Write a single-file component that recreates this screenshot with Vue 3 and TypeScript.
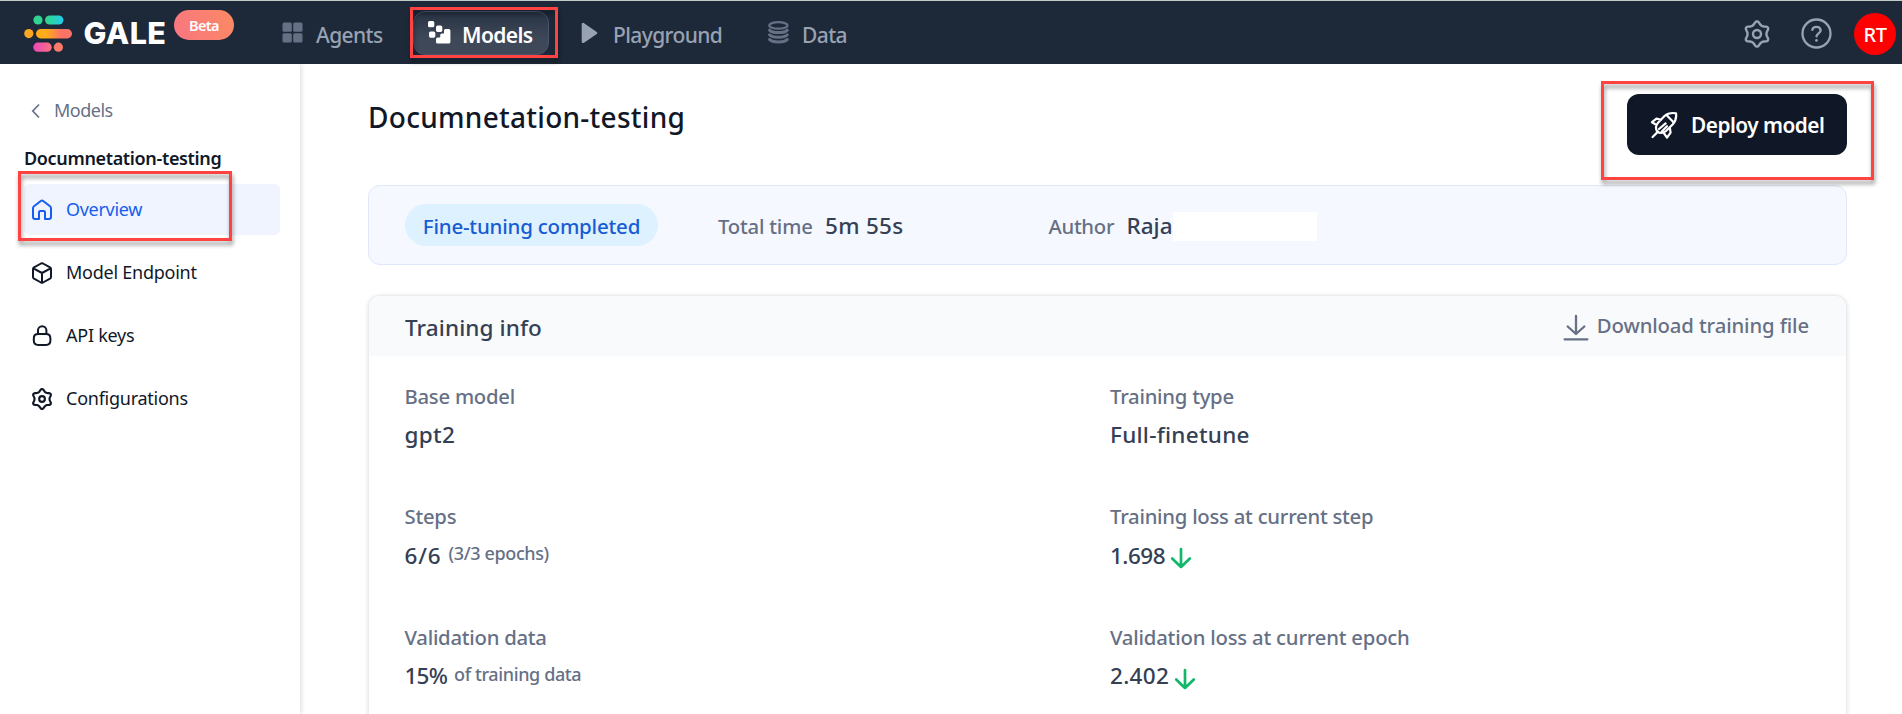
<script setup lang="ts">
interface Field {
  id: string
  label: string
  value: string
  note?: string
  down?: boolean
}

const fields: Field[] = [
  { id: 'base', label: 'Base model', value: 'gpt2' },
  { id: 'type', label: 'Training type', value: 'Full-finetune' },
  { id: 'steps', label: 'Steps', value: '6/6', note: '(3/3 epochs)' },
  { id: 'tloss', label: 'Training loss at current step', value: '1.698', down: true },
  { id: 'vdata', label: 'Validation data', value: '15%', note: 'of training data' },
  { id: 'vloss', label: 'Validation loss at current epoch', value: '2.402', down: true },
]

const menu: { id: string; label: string }[] = [
  { id: 'overview', label: 'Overview' },
  { id: 'endpoint', label: 'Model Endpoint' },
  { id: 'keys', label: 'API keys' },
  { id: 'config', label: 'Configurations' },
]

// Six-lobed gear outline centred in a 28-unit box
const gear: string =
  Array.from({ length: 72 }, (_, i) => {
    const t = (i * Math.PI) / 36
    const r = 10.8 + 1.6 * Math.cos(6 * t) + 0.25 * Math.cos(12 * t)
    return `${i ? 'L' : 'M'}${(14 + r * Math.sin(t)).toFixed(2)} ${(14 - r * Math.cos(t)).toFixed(2)}`
  }).join('') + 'Z'
</script>

<template>
  <div class="page">
    <header class="bar">
      <div class="brand">
        <svg class="logo" width="50" height="38" viewBox="0 0 50 38">
          <defs>
            <linearGradient id="teal" x1="0" y1="0" x2="1" y2="0"><stop offset="0" stop-color="#32d583" /><stop offset="1" stop-color="#22ccee" /></linearGradient>
            <linearGradient id="amber" x1="0" y1="0" x2="1" y2="0"><stop offset=".3" stop-color="#ffab1a" /><stop offset=".7" stop-color="#fb7366" /></linearGradient>
            <linearGradient id="pink" x1="0" y1="0" x2="1" y2="0"><stop offset="0" stop-color="#ee46bc" /><stop offset="1" stop-color="#f8727d" /></linearGradient>
          </defs>
          <circle cx="14" cy="5" r="4.6" fill="#2fd393" />
          <rect x="21" y=".4" width="18.4" height="9.2" rx="4.6" fill="url(#teal)" />
          <circle cx="4.8" cy="18.6" r="4.6" fill="#ffa524" />
          <rect x="12" y="14" width="36" height="9.4" rx="4.7" fill="url(#amber)" />
          <rect x="9.3" y="27.6" width="18.4" height="9.2" rx="4.6" fill="url(#pink)" />
          <circle cx="34.4" cy="32.2" r="4.6" fill="#fb7a6c" />
        </svg>
        <span class="word">GALE</span>
        <span class="beta">Beta</span>
      </div>
      <nav class="nav">
        <a class="item agents">
          <svg width="21" height="21" viewBox="0 0 21 21" fill="#667085">
            <rect x=".5" y=".5" width="9.3" height="9.3" rx="1.5" /><rect x="11.2" y=".5" width="9.3" height="9.3" rx="1.5" />
            <rect x=".5" y="11.2" width="9.3" height="9.3" rx="1.5" /><rect x="11.2" y="11.2" width="9.3" height="9.3" rx="1.5" />
          </svg>
          <span>Agents</span>
        </a>
        <a class="item models">
          <svg width="23" height="23" viewBox="0 0 23 23" fill="#fff">
            <rect x="0" y="0" width="6.3" height="6.3" rx="1.6" /><rect x="8" y="4.6" width="6.3" height="6.3" rx="1.6" />
            <rect x="1" y="10.4" width="6.3" height="6.3" rx="1.6" />
            <path d="M16 9.6Q16 8 17.6 8H20.7Q22.4 8 22.4 9.6V20.9Q22.4 22.5 20.8 22.5H9.6Q8 22.5 8 20.9V18Q8 16.4 9.6 16.4H12.2V14.2Q12.2 12.6 13.8 12.6H16Z" />
          </svg>
          <span>Models</span>
          <i class="mark mark-nav"></i>
        </a>
        <a class="item play">
          <svg width="17" height="22" viewBox="0 0 17 22"><path d="M2 2.2V19.8L15 11Z" fill="#98a2b3" stroke="#98a2b3" stroke-width="2.6" stroke-linejoin="round" /></svg>
          <span>Playground</span>
        </a>
        <a class="item data">
          <svg width="21" height="23" viewBox="0 0 21 23" fill="none" stroke="#667085">
            <ellipse cx="10.4" cy="4.4" rx="9.1" ry="3.2" stroke-width="2.2" />
            <path d="M1.6 9.2C4.2 12.3 16.6 12.3 19.2 9.2M1.6 13.9C4.2 17 16.6 17 19.2 13.9M1.6 18.5C4.2 21.8 16.6 21.8 19.2 18.5" stroke-width="3" stroke-linecap="round" />
          </svg>
          <span>Data</span>
        </a>
      </nav>
      <div class="tools">
        <svg width="28" height="28" viewBox="0 0 28 28" fill="none" stroke="#98a2b3" stroke-width="2.4"><path :d="gear" stroke-linejoin="round" /><circle cx="14" cy="14" r="4" /></svg>
        <svg class="help" width="31" height="31" viewBox="0 0 31 31" fill="none" stroke="#98a2b3" stroke-width="2.3" stroke-linecap="round" stroke-linejoin="round">
          <circle cx="15.5" cy="15.5" r="14" /><path d="M11.3 11.8C12 8 18.9 7.5 19.7 12.2C19.8 15.2 15.6 15.6 15.5 18.4" /><path d="M15.5 22.4V22.5" stroke-width="2.7" />
        </svg>
        <span class="avatar">RT</span>
      </div>
    </header>

    <div class="body">
      <aside class="side">
        <a class="back">
          <svg width="10" height="16" viewBox="0 0 10 16" fill="none" stroke="#667085" stroke-width="1.7"><path d="M8 1.5 1.8 8 8 14.5" /></svg>
          <span>Models</span>
        </a>
        <div class="name">Documnetation-testing</div>
        <a v-for="m in menu" :key="m.id" class="entry" :class="m.id">
          <svg width="24" height="24" viewBox="0 0 24 24" fill="none" stroke="currentColor" stroke-width="2" stroke-linejoin="round" stroke-linecap="round">
            <path v-if="m.id === 'overview'" d="M9 21H5.2Q3 21 3 18.8V10.2Q3 9 4 8.2L10.8 3Q12 2 13.2 3L20 8.2Q21 9 21 10.2V18.8Q21 21 18.8 21H15V14.2Q15 13 13.8 13H10.2Q9 13 9 14.2Z" />
            <path v-else-if="m.id === 'endpoint'" d="M11 2.5Q12 2 13 2.5L20 6.4Q21 7 21 8.1V15.9Q21 17 20 17.6L13 21.5Q12 22 11 21.5L4 17.6Q3 17 3 15.9V8.1Q3 7 4 6.4ZM3.4 7.3 12 12 20.6 7.3M12 12V21.7" />
            <path v-else-if="m.id === 'keys'" d="M8 10V6.5a4.2 4.2 0 0 1 8.4 0V10M8.2 10H16Q20.4 10 20.4 14.4V16.6Q20.4 21 16 21H8.2Q3.8 21 3.8 16.6V14.4Q3.8 10 8.2 10Z" />
            <g v-else transform="translate(.9 .9) scale(.795)" stroke-width="2.7"><path :d="gear" /><circle cx="14" cy="14" r="3.6" /></g>
          </svg>
          <span>{{ m.label }}</span>
          <i v-if="m.id === 'overview'" class="mark mark-side"></i>
        </a>
      </aside>

      <main class="main">
        <div class="head">
          <h1>Documnetation-testing</h1>
          <div class="deploy-wrap">
            <button class="deploy">
              <svg width="28" height="28" viewBox="0 0 28 28" fill="none" stroke="#fff" stroke-width="2.2" stroke-linejoin="round" stroke-linecap="round">
                <path d="M26 2.3C22 1.6 17.5 2.4 14.5 5L8 11.7C5.6 14.6 5.4 17.6 7.2 20.6C10.2 22.6 13.4 22.2 16 20L22.6 13.5C25.6 10.2 26.6 6 26 2.3ZM16.5 4 24 11.8M11 8.7 6.5 7.6 2 11.2 6.6 14M19.8 16.8 20.6 21.6 17 26.6 13.8 22M2.6 26 8 20.6M9 18 15.6 12.4M12 20.2 17 15.2" />
              </svg>
              <span>Deploy model</span>
            </button>
            <i class="mark mark-deploy"></i>
          </div>
        </div>

        <section class="status">
          <span class="pill">Fine-tuning completed</span>
          <span class="k time">Total time</span><span class="v timev">5m 55s</span>
          <span class="k author">Author</span><span class="v authorv">Raja</span>
          <span class="blank"></span>
        </section>

        <section class="card">
          <div class="card-head">
            <h2>Training info</h2>
            <a class="download">
              <svg width="26" height="28" viewBox="0 0 26 28" fill="none" stroke="#667085" stroke-width="2.3" stroke-linecap="round" stroke-linejoin="round"><path d="M13 2V19.6M4.7 12.5 13 20 21.3 12.5M1.6 25.3H24.4" /></svg>
              <span>Download training file</span>
            </a>
          </div>
          <div class="grid">
            <div v-for="f in fields" :key="f.id" class="field" :class="f.id">
              <div class="label">{{ f.label }}</div>
              <div class="value">
                <span class="num">{{ f.value }}</span>
                <span v-if="f.note" class="note">{{ f.note }}</span>
                <svg v-if="f.down" width="22" height="22" viewBox="0 0 22 22" fill="none" stroke="#12b76a" stroke-width="2.7" stroke-linecap="round" stroke-linejoin="round"><path d="M11 2V20M2.2 11.5 11 20 19.8 11.5" /></svg>
              </div>
            </div>
          </div>
        </section>
      </main>
    </div>
  </div>
</template>

<style>
html, body { margin: 0; overflow: hidden; background: #fff; }
</style>

<style scoped>
* { box-sizing: border-box; }
.page { width: 1902px; height: 714px; overflow: hidden; display: flex; flex-direction: column; font-family: "Noto Sans", "Open Sans", sans-serif; font-weight: 500; white-space: nowrap; }
svg { flex: none; display: block; }

.bar { height: 64px; flex: none; display: flex; align-items: center; background: #1d2939; border-top: 1px solid #c3cbc9; position: relative; z-index: 1; }
.brand { width: 282px; height: 63px; display: flex; padding-left: 24px; }
.logo { margin-top: 14px; }
.word { margin: 8px 0 0 9.5px; width: 90.5px; font: 800 30.5px/48px Inter, sans-serif; letter-spacing: .4px; color: #fff; }
.beta { width: 60px; height: 30px; margin-top: 9px; border-radius: 15px; background: linear-gradient(70deg, #f97581, #fb8a63); color: #fff; font-size: 14.5px; font-weight: 600; line-height: 31px; text-align: center; letter-spacing: -.6px; }
.nav { display: flex; align-items: center; height: 63px; }
.item { display: flex; align-items: center; height: 44px; color: #98a2b3; font-size: 21px; letter-spacing: -.6px; position: relative; }
.item span { line-height: 30px; padding-top: 4px; }
.agents { width: 131px; gap: 13px; }
.models { width: 136px; margin-right: 32px; padding-left: 14px; gap: 11px; color: #fff; font-weight: 600; border: 1px solid #475467; border-radius: 12px; background: linear-gradient(#273243, #3d4758 60%, #3f495a); }
.play { width: 187px; gap: 15px; }
.data { gap: 13px; }
.tools { margin-left: auto; display: flex; align-items: center; padding: 2px 6px 0 0; }
.help { margin: 0 22px 0 30px; }
.avatar { width: 42px; height: 42px; border-radius: 50%; background: #f00; color: #fff; font-size: 20px; line-height: 43px; text-align: center; letter-spacing: -.5px; }

.mark { position: absolute; border: 3px solid #ff4242; filter: drop-shadow(1px 4px 2px rgba(0, 0, 0, .4)); pointer-events: none; }
.mark-nav { left: -4px; top: -5px; width: 148px; height: 51px; }
.mark-side { left: -6px; top: -13px; width: 214px; height: 70px; }
.mark-deploy { left: -26px; top: -13px; width: 273px; height: 99px; }

.body { flex: 1; display: flex; min-height: 0; }
.side { width: 300px; flex: none; padding: 32px 20px 0 24px; box-shadow: 1px 0 5px rgba(16, 24, 40, .16); font-size: 18px; }
.back { display: flex; align-items: center; gap: 13px; height: 30px; padding-left: 7px; color: #667085; font-weight: 400; letter-spacing: -.5px; }
.back span { margin-top: -2px; }
.name { height: 28px; margin: 18px 0 12px; line-height: 28px; font-weight: 600; color: #101828; letter-spacing: -.34px; }
.entry { height: 51px; margin-bottom: 12px; padding-left: 6px; display: flex; align-items: center; gap: 12px; border-radius: 6px; color: #101828; letter-spacing: -.25px; font-weight: 450; position: relative; }
.entry span { margin-top: -1px; }
.entry.overview { background: #eff4ff; color: #155eef; letter-spacing: -.3px; }

.main { width: 1479px; margin-left: 68px; display: flex; flex-direction: column; }
.head { height: 121px; flex: none; display: flex; justify-content: space-between; align-items: flex-start; }
h1 { margin: 33px 0 0; font-size: 28px; line-height: 40px; font-weight: 500; color: #101828; letter-spacing: .28px; }
.deploy-wrap { position: relative; margin-top: 30px; }
.deploy { display: flex; align-items: center; width: 220px; height: 61px; padding: 0 0 0 23px; gap: 13px; border: 0; border-radius: 12px; background: #101828; color: #fff; font: 600 20.8px/30px "Noto Sans", sans-serif; letter-spacing: -.5px; }

.status { height: 80px; flex: none; display: flex; align-items: center; padding-left: 36px; background: #f5f8ff; border: 1px solid #e0e7fa; border-radius: 12px; }
.status > span { flex: none; }
.pill { width: 253px; height: 42px; margin-right: 60px; border-radius: 21px; background: #def1ff; color: #175cd3; font-size: 20.5px; line-height: 44px; text-align: center; letter-spacing: -.22px; }
.k, .label, .download { font-size: 20.3px; color: #667085; letter-spacing: -.25px; }
.k { padding-top: 2px; letter-spacing: -.2px; }
.v { padding-top: 1px; font-size: 22.5px; color: #344054; }
.time { width: 107px; }
.timev { width: 223.5px; letter-spacing: .3px; }
.author { width: 78px; letter-spacing: -.3px; }
.authorv { width: 46.5px; letter-spacing: 0; }
.blank { width: 144px; height: 29px; background: #fff; margin-top: 3px; }

.card { flex: none; height: 500px; margin-top: 30px; border: 1px solid #eaecf0; border-radius: 12px; box-shadow: 0 1px 4px rgba(16, 24, 40, .14); overflow: hidden; background: #fff; }
.card-head { height: 60px; display: flex; align-items: center; justify-content: space-between; padding: 0 37px 0 36px; background: #f9fafc; }
h2 { margin: 3px 0 0; font-size: 22.5px; line-height: 32px; font-weight: 500; color: #344054; letter-spacing: .1px; }
.download { display: flex; align-items: center; gap: 8px; letter-spacing: -.12px; }
.download svg { margin-top: 3px; }
.download span { margin-top: -2px; }
.grid { display: grid; grid-template-columns: 705.5px 1fr; row-gap: 50.5px; padding: 24.8px 0 0 35.5px; }
.label { height: 38px; line-height: 30px; }
.value { height: 32px; display: flex; align-items: center; font-size: 22.5px; line-height: 33px; color: #344054; }
.value svg { margin: 6px 0 0 5px; }
.note { margin: -3px 0 0 7px; font-size: 18px; color: #667085; letter-spacing: -.38px; }
.steps .num { letter-spacing: .9px; }
.base .num { letter-spacing: .3px; }
.type .num { letter-spacing: .27px; }
.vloss .label { letter-spacing: -.2px; }
.vdata .num { letter-spacing: -.8px; }
.tloss .num { letter-spacing: -.5px; }
.vloss .num { letter-spacing: .3px; }
</style>
